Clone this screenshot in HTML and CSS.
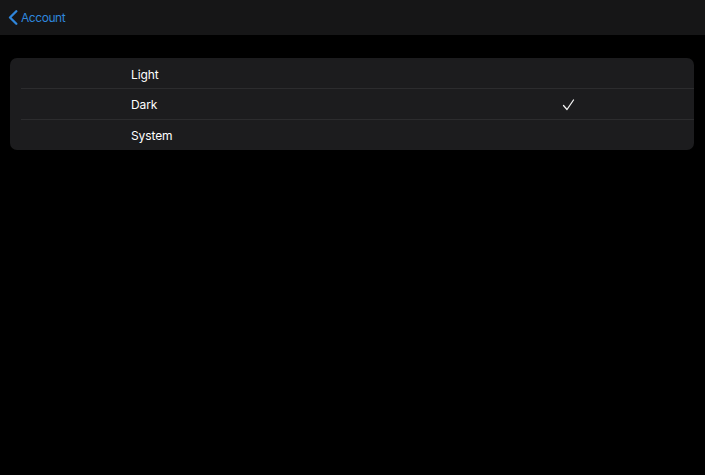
FILE: index.html
```html
<!DOCTYPE html>
<html>
<head>
<meta charset="utf-8">
<link rel="stylesheet" href="styles.css">
</head>
<body>
<header class="nav">
  <a class="back" href="#">
    <svg class="chev" width="10" height="15" viewBox="0 0 10 15"><path d="M8.3 1.3 L2 7.5 L8.3 13.7" fill="none" stroke="#2f86dc" stroke-width="2.3" stroke-linecap="round" stroke-linejoin="round"/></svg>
    <span>Account</span>
  </a>
</header>
<main class="content">
  <ul class="list">
    <li class="row"><span class="label">Light</span></li>
    <li class="row"><span class="label">Dark</span><svg class="check" width="13" height="12" viewBox="0 0 13 12"><path d="M1.5 6.5 L5 10.5 L11.5 1" fill="none" stroke="#f2f2f2" stroke-width="1.3" stroke-linecap="round" stroke-linejoin="round"/></svg></li>
    <li class="row"><span class="label">System</span></li>
  </ul>
</main>
</body>
</html>
```
FILE: styles.css
```css
* { box-sizing: border-box; }
html, body { margin: 0; padding: 0; background: #000; height: 100%; }
body { font-family: Inter, "Noto Sans", sans-serif; color: #fff; }
.nav {
  height: 35px;
  background: #161617;
  display: flex;
  align-items: center;
  padding-left: 8px;
}
.back {
  display: flex;
  align-items: center;
  gap: 3px;
  color: #2f86dc;
  text-decoration: none;
  font-size: 12px;
  letter-spacing: -0.45px;
}
.content { padding: 23px 11px 0 10px; }
.list {
  list-style: none;
  margin: 0;
  padding: 0 0 0 11px;
  background: #1c1c1e;
  border-radius: 7px;
}
.row {
  height: 31px;
  display: flex;
  align-items: center;
  padding-left: 110px;
  padding-top: 1px;
  border-top: 1px solid #2c2c2e;
  font-size: 12px;
  letter-spacing: -0.1px;
}
.row:first-child { border-top: none; height: 30px; padding-top: 2px; }
.label { flex: 1; }
.check { margin-right: 119px; }
```
